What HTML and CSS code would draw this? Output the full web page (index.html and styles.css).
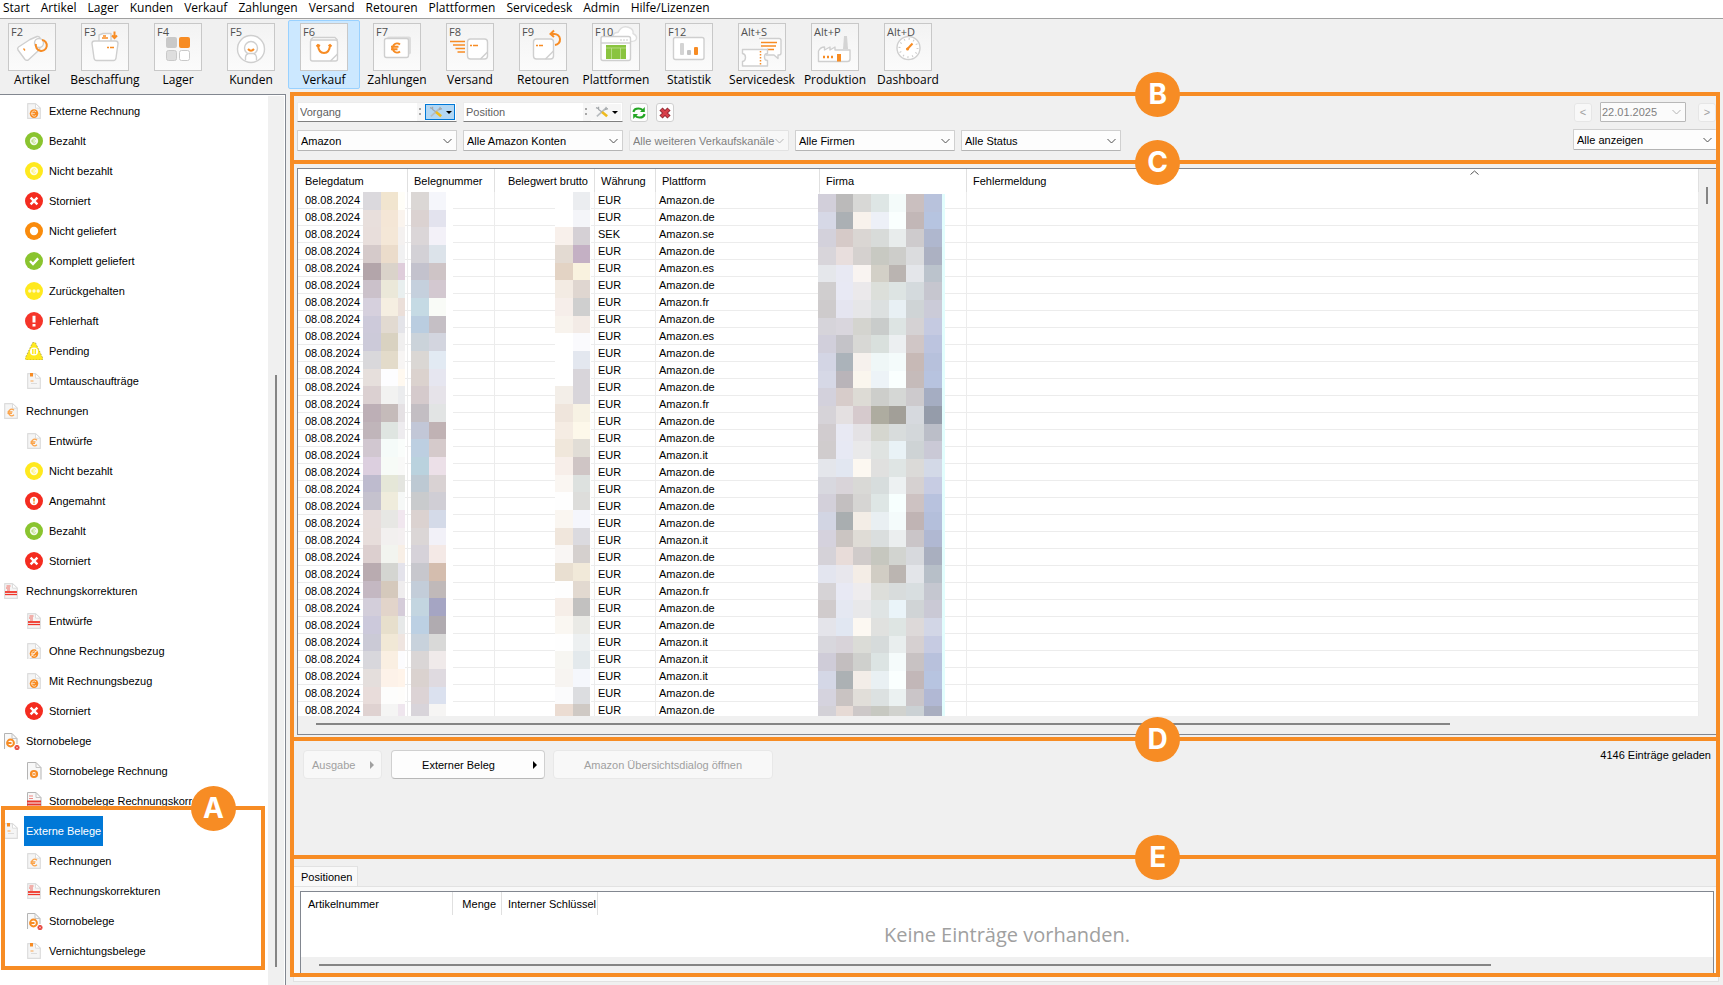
FILE: index.html
```html
<!DOCTYPE html>
<html lang="de">
<head>
<meta charset="utf-8">
<title>Verkauf – Externe Belege</title>
<link rel="stylesheet" href="styles.css">
</head>
<body>
<svg class="sprite" aria-hidden="true">
  <symbol id="page" viewBox="0 0 18 18"><path d="M2.7 1.6h7.8l4.8 4.6v10.2H2.7z" fill="#f5f5f5" stroke="#dcdcdc" stroke-width="1.2" stroke-linejoin="round"/><path d="M10.5 1.6v4.6h4.8z" fill="#fff" stroke="#dcdcdc"/></symbol>
  <symbol id="doc-euro" viewBox="0 0 18 18"><use href="#page"/><path d="M12 8.2a3.200 3.200 0 1 0 0 4.600M5.500 9.800h5M5.500 11.400h4.500" fill="none" stroke="#fba44b" stroke-width="1.200"/></symbol>
  <symbol id="doc-coin" viewBox="0 0 18 18"><use href="#page"/><circle cx="9" cy="11.6" r="4.3" fill="#f78c24"/><path d="M11 9.7a2.6 2.6 0 1 0 0 3.8M6.2 11.6h3.6" fill="none" stroke="#fbd9b4"/></symbol>
  <symbol id="doc-coin-off" viewBox="0 0 18 18"><use href="#doc-coin"/><path d="M3.5 17 14 6.5" stroke="#fff" stroke-width="1"/></symbol>
  <symbol id="doc-red" viewBox="0 0 18 18"><use href="#page"/><path d="M4.500 4h4M4 6h4M5 8h3" stroke="#ee6a60"/><path d="M3 10h12" stroke="#f03529" stroke-width="1.800"/><path d="M3 12.500h12" stroke="#f03529" stroke-width="1.300"/></symbol>
  <symbol id="doc-note" viewBox="0 0 18 18"><use href="#page"/><path d="M6.500 1v3.500" stroke="#f78c24" stroke-width="3"/><path d="M5.500 9h3" stroke="#fba44b"/><path d="M6 11.500h6" stroke="#dcdcdc"/></symbol>
  <symbol id="doc-storno" viewBox="0 0 18 18"><path d="M2.500 17V1.500H10l5 5V12" fill="#f8f8f8" stroke="#b4b4b4"/><path d="M10 1.500v5h5" fill="none" stroke="#c4c4c4"/><circle cx="8.500" cy="11" r="3.400" fill="#fff" stroke="#f78c24" stroke-width="2"/><path d="M5 11h4.500" stroke="#f78c24" stroke-width="2"/><circle cx="15" cy="15.500" r="2.500" fill="#e63a30"/><path d="m14 14.500 2 2m0-2-2 2" stroke="#fff" stroke-width=".7"/></symbol>
  <symbol id="doc-storno-plain" viewBox="0 0 18 18"><path d="M2.500 17.500V.5H11l5 5v12" fill="#f8f8f8" stroke="#b4b4b4"/><path d="M11 .5v5h5" fill="none" stroke="#c4c4c4"/><circle cx="9" cy="12" r="3" fill="#fff" stroke="#f78c24" stroke-width="2.200"/><path d="M7.500 12h3" stroke="#f78c24" stroke-width="1.500"/></symbol>
  <symbol id="doc-red-plain" viewBox="0 0 18 18"><path d="M2.500 17.500V.5H11l5 5v12" fill="#f8f8f8" stroke="#b4b4b4"/><path d="M11 .5v5h5" fill="none" stroke="#c4c4c4"/><path d="M4 4h4M4 6.500h4" stroke="#ee8a84"/><path d="M2 9.500h14M2 12.500h14" stroke="#e8382d" stroke-width="2"/></symbol>
  <symbol id="ring-green" viewBox="0 0 18 18"><circle cx="9" cy="9" r="9" fill="#8ac42f"/><circle cx="9" cy="9" r="4.200" fill="#f4faea"/><path d="M10.800 7.400a2.200 2.200 0 1 0 0 3.200M6.300 9h3.500" fill="none" stroke="#b5da7c" stroke-width=".9"/></symbol>
  <symbol id="ring-yellow" viewBox="0 0 18 18"><circle cx="9" cy="9" r="9" fill="#ffe91e"/><circle cx="9" cy="9" r="4.200" fill="#fffde6"/><path d="M10.800 7.400a2.200 2.200 0 1 0 0 3.200M6.300 9h3.500" fill="none" stroke="#fdf06c" stroke-width=".9"/></symbol>
  <symbol id="ring-red" viewBox="0 0 18 18"><circle cx="9" cy="9" r="9" fill="#f42c20"/><circle cx="9" cy="9" r="4.200" fill="#fff"/><path d="M9 6.200v3.300M9 10.500v1.300" stroke="#f78c24" stroke-width="1.600"/></symbol>
  <symbol id="ring-orange" viewBox="0 0 18 18"><circle cx="9" cy="9" r="9" fill="#f98b0c"/><circle cx="9" cy="9" r="4.200" fill="#fff"/></symbol>
  <symbol id="cross" viewBox="0 0 18 18"><circle cx="9" cy="9" r="9" fill="#f42c20"/><path d="m5.600 5.600 6.800 6.800m0-6.800-6.800 6.800" stroke="#fff" stroke-width="2.400"/></symbol>
  <symbol id="check" viewBox="0 0 18 18"><circle cx="9" cy="9" r="9" fill="#8ac42f"/><path d="m5 9 3 3 5.200-5.600" fill="none" stroke="#fff" stroke-width="2.300"/></symbol>
  <symbol id="dots" viewBox="0 0 18 18"><circle cx="9" cy="9" r="9" fill="#ffe91e"/><circle cx="4.800" cy="9" r="1.700" fill="#fffbd0"/><circle cx="9" cy="9" r="1.700" fill="#fffbd0"/><circle cx="13.200" cy="9" r="1.700" fill="#fffbd0"/></symbol>
  <symbol id="alert" viewBox="0 0 18 18"><circle cx="9" cy="9" r="9" fill="#f5352a"/><path d="M9 3.800v6.700M9 12v2.500" stroke="#fff" stroke-width="3"/></symbol>
  <symbol id="pause" viewBox="0 0 18 18"><path d="M7.500.8q1.500-1 3 0L18 16.500l-1 1.500H1l-1-1.500z" fill="#ffe91e" stroke="#8f8a4a" stroke-width=".7" stroke-dasharray="1.500 1.500"/><circle cx="9" cy="9.500" r="4" fill="#fff"/><path d="M7.800 7v5M10.300 7v5" stroke="#ffe91e" stroke-width="1.500"/></symbol>
  <symbol id="tools" viewBox="0 0 16 14"><path d="M2 12 12 3" stroke="#b9bdc0" stroke-width="2"/><path d="m1 2 3 1M4 1v3l4 3M13 1l-1 3 3-1" fill="none" stroke="#a4a8ab" stroke-width="1.500"/><path d="m8 7 6 5" stroke="#eeba1d" stroke-width="3"/></symbol>
</svg>

<nav class="menubar" aria-label="Hauptmenü">
  <button>Start</button><button>Artikel</button><button>Lager</button><button>Kunden</button><button>Verkauf</button><button>Zahlungen</button><button>Versand</button><button>Retouren</button><button>Plattformen</button><button>Servicedesk</button><button>Admin</button><button>Hilfe/Lizenzen</button>
</nav>

<div class="toolbar" role="toolbar" aria-label="Module">
  <button class="module"><span class="tile"><kbd>F2</kbd><svg viewBox="0 0 48 48"><path d="M22 16.500 10.500 24q-1.500 1.200-.5 3l7 9.500q1.500 1.500 3.500.3L30 28q2-1.500 2-4l.5-7.500q-.5-3.500-3.500-3z" class="g"/><circle cx="31" cy="20" r="4.500" class="g"/><path d="M28 21a5.500 5.500 0 1 0 6-4" class="o"/><path d="m15.500 25.500 1.500 2" class="o thin"/></svg></span>Artikel</button>
  <button class="module"><span class="tile"><kbd>F3</kbd><svg viewBox="0 0 48 48"><path d="M18 18v-6l4-1.500h8V18" class="g"/><path d="M21 15h6M22 13h3" class="o thin"/><path d="M11 20.500q0-2.500 2.500-2.500h21q2.500 0 2.500 2.500L35 35q-.3 2.500-2.500 2.500h-17q-2.200 0-2.500-2.500z" class="g"/><path d="M26 24.500h2m1 0h4" class="o thin"/><path d="M33.500 8.500v6m-2.500-2 2.500 2.500 2.500-2.500" class="o"/></svg></span>Beschaffung</button>
  <button class="module"><span class="tile"><kbd>F4</kbd><svg viewBox="0 0 48 48"><rect x="12" y="14" width="11" height="11" rx="2" fill="#c9c9c9"/><rect x="25" y="14" width="11" height="11" rx="2" fill="#f78c24"/><rect x="12.500" y="27.500" width="10" height="10" rx="2" fill="#dedede" stroke="#c9c9c9"/><rect x="25.500" y="27.500" width="10" height="10" rx="2" fill="#fff" stroke="#c9c9c9"/></svg></span>Lager</button>
  <button class="module"><span class="tile"><kbd>F5</kbd><svg viewBox="0 0 48 48"><circle cx="24" cy="26" r="13.500" class="g"/><circle cx="24" cy="25" r="6.500" class="g"/><path d="M18.500 37.500V34q.5-3 3-3.500h5q2.500.5 3 3.500v3.500" class="g"/><path d="M21 26q3 3.500 6 0" class="o"/></svg></span>Kunden</button>
  <button class="module current"><span class="tile"><kbd>F6</kbd><svg viewBox="0 0 48 48"><path d="m10.500 17 2.500-2.500h22l2.500 2.500" class="g" /><rect x="10.500" y="17" width="27" height="21" rx="2" class="g"/><path d="m37.500 31-7 7" class="g"/><path d="M18 22q.5 8 6 8t6-8m-13.500 1.500L18 22l2 1m8.500 0 1.500-1 1.500 1.500" class="o"/></svg></span>Verkauf</button>
  <button class="module"><span class="tile"><kbd>F7</kbd><svg viewBox="0 0 48 48"><rect x="14" y="13.500" width="24" height="18" rx="2" fill="#ddd"/><rect x="11.500" y="15.500" width="24" height="19" rx="2" class="g"/><path d="M27 21.500a4.500 4.500 0 1 0 0 7M18 23.800h7.500M18 26.300h6.500" class="o"/></svg></span>Zahlungen</button>
  <button class="module"><span class="tile"><kbd>F8</kbd><svg viewBox="0 0 48 48"><path d="M4 18.500h15M7 22h12M9.500 25.500H19M11.500 29H19" class="o thin"/><rect x="21.500" y="16" width="20" height="20" rx="3" class="g"/><path d="m41.500 29-7 7" class="g"/><path d="M24 22.500h2m1 0h5" class="o thin"/></svg></span>Versand</button>
  <button class="module"><span class="tile"><kbd>F9</kbd><svg viewBox="0 0 48 48"><rect x="14.500" y="16" width="20" height="20" rx="3" class="g"/><path d="m34.500 28-8 8" class="g"/><path d="M17 22.500h2m1 0h4" class="o thin"/><path d="M32 11h3a5.500 5.500 0 0 1 1 11M35 7.500 31.500 11l3.500 3" class="o"/></svg></span>Retouren</button>
  <button class="module"><span class="tile"><kbd>F10</kbd><svg viewBox="0 0 48 48"><path d="M21 13q1-4 5-3.500 4-8 11-5 5 2 4 6 4 2 3.500 5-.5 3-5.500 3" class="g pale"/><rect x="9" y="13.500" width="29.500" height="24" rx="2" class="g"/><path d="M9 20h29.500" class="g"/><path d="M28 17h2m1 0h2m1 0h2" stroke="#ccc"/><path d="M14 22h20v14H14z" fill="#8ac43f"/><path d="M14 25h20M19.500 25v11M28.500 25v11" stroke="#c2e294" stroke-width=".8"/></svg></span>Plattformen</button>
  <button class="module"><span class="tile"><kbd>F12</kbd><svg viewBox="0 0 48 48"><rect x="8.500" y="14.500" width="30.500" height="22" rx="2" class="g"/><rect x="15" y="20" width="4" height="12" rx="1" fill="#d4d4d4"/><rect x="22" y="27" width="4" height="5" rx="1" fill="#c4c4c4"/><rect x="29" y="24" width="4" height="8" rx="1" fill="#f78c24"/></svg></span>Statistik</button>
  <button class="module"><span class="tile"><kbd>Alt+S</kbd><svg viewBox="0 0 48 48"><path d="M21 15.500h20q2 0 2 2V30q0 2-2 2h-1v3.500L36 32h-8" class="g"/><path d="M23 19.500h16M23 23h15M29 26.500h7" class="o thin"/><path d="M4.500 26.500h25v4q-3 0-3 3.500t3 3.500V43h-25v-4.500q3-.5 3-4t-3-4z" class="g"/><path d="M22.500 28v14" stroke="#f78c24" stroke-width="1.500" stroke-dasharray="1.500 1.500"/></svg></span>Servicedesk</button>
  <button class="module"><span class="tile"><kbd>Alt+P</kbd><svg viewBox="0 0 48 48"><path d="m32 26 1-13h3l1 13z" fill="#d4d4d4"/><path d="M7.500 38.500V28q2-4 6-4v3l5.500-3v3l5-3v3h15v9q0 2.500-2.500 2.500z" class="g"/><path d="M12 34h2m2 0h2m2 0h2" stroke="#f78c24" stroke-width="2.500"/><path d="M26 31h4v7.500h-4z" fill="#f78c24"/></svg></span>Produktion</button>
  <button class="module"><span class="tile"><kbd>Alt+D</kbd><svg viewBox="0 0 48 48"><circle cx="24.500" cy="25" r="11.500" class="g"/><circle cx="24.500" cy="25" r="9" fill="none" stroke="#ccc" stroke-width="2" stroke-dasharray="1 3.700"/><path d="m23 26.500 5.500-6" class="o"/><circle cx="23.500" cy="26" r="1.500" fill="#f78c24"/></svg></span>Dashboard</button>
</div>

<div class="workspace">
  <aside class="sidebar">
    <div class="tree">
      <ul>
        <li class="sub"><svg><use href="#doc-coin"/></svg><span>Externe Rechnung</span></li>
        <li class="sub"><svg><use href="#ring-green"/></svg><span>Bezahlt</span></li>
        <li class="sub"><svg><use href="#ring-yellow"/></svg><span>Nicht bezahlt</span></li>
        <li class="sub"><svg><use href="#cross"/></svg><span>Storniert</span></li>
        <li class="sub"><svg><use href="#ring-orange"/></svg><span>Nicht geliefert</span></li>
        <li class="sub"><svg><use href="#check"/></svg><span>Komplett geliefert</span></li>
        <li class="sub"><svg><use href="#dots"/></svg><span>Zurückgehalten</span></li>
        <li class="sub"><svg><use href="#alert"/></svg><span>Fehlerhaft</span></li>
        <li class="sub"><svg><use href="#pause"/></svg><span>Pending</span></li>
        <li class="sub"><svg><use href="#doc-note"/></svg><span>Umtauschaufträge</span></li>
        <li><svg><use href="#doc-euro"/></svg><span>Rechnungen</span></li>
        <li class="sub"><svg><use href="#doc-euro"/></svg><span>Entwürfe</span></li>
        <li class="sub"><svg><use href="#ring-yellow"/></svg><span>Nicht bezahlt</span></li>
        <li class="sub"><svg><use href="#ring-red"/></svg><span>Angemahnt</span></li>
        <li class="sub"><svg><use href="#ring-green"/></svg><span>Bezahlt</span></li>
        <li class="sub"><svg><use href="#cross"/></svg><span>Storniert</span></li>
        <li><svg><use href="#doc-red"/></svg><span>Rechnungskorrekturen</span></li>
        <li class="sub"><svg><use href="#doc-red"/></svg><span>Entwürfe</span></li>
        <li class="sub"><svg><use href="#doc-coin-off"/></svg><span>Ohne Rechnungsbezug</span></li>
        <li class="sub"><svg><use href="#doc-coin"/></svg><span>Mit Rechnungsbezug</span></li>
        <li class="sub"><svg><use href="#cross"/></svg><span>Storniert</span></li>
        <li><svg><use href="#doc-storno"/></svg><span>Stornobelege</span></li>
        <li class="sub"><svg><use href="#doc-storno-plain"/></svg><span>Stornobelege Rechnung</span></li>
        <li class="sub"><svg><use href="#doc-red-plain"/></svg><span>Stornobelege Rechnungskorrekturen</span></li>
      </ul>
      <div class="marked">
        <ul>
          <li class="selected"><svg><use href="#doc-note"/></svg><span>Externe Belege</span></li>
          <li class="sub"><svg><use href="#doc-euro"/></svg><span>Rechnungen</span></li>
          <li class="sub"><svg><use href="#doc-red"/></svg><span>Rechnungskorrekturen</span></li>
          <li class="sub"><svg><use href="#doc-storno"/></svg><span>Stornobelege</span></li>
          <li class="sub"><svg><use href="#doc-note"/></svg><span>Vernichtungsbelege</span></li>
        </ul>
        <div class="outline"><b class="badge">A</b></div>
      </div>
    </div>
    <div class="vscroll"><i></i></div>
  </aside>

  <main class="main">
    <div class="frame">
      <section class="filters">
        <b class="badge">B</b>
        <div class="filter-left">
          <div class="line">
            <div class="search"><input type="text" placeholder="Vorgang" aria-label="Vorgang"><span class="grip"></span><button class="opt active" aria-label="Suchoptionen Vorgang"><svg><use href="#tools"/></svg><i></i></button></div>
            <div class="search"><input type="text" placeholder="Position" aria-label="Position"><span class="grip"></span><button class="opt" aria-label="Suchoptionen Position"><svg><use href="#tools"/></svg><i></i></button></div>
            <div class="actions">
              <button class="mini" aria-label="Aktualisieren"><svg viewBox="0 0 14 14"><path d="M1.500 6Q2 2.500 6.500 2.500q2.500 0 4 1.500M12.500 8Q12 11.500 7.500 11.500q-2.500 0-4-1.500" fill="none" stroke="#22a522" stroke-width="2.200"/><path d="M12.800 1v5H8zM1.200 13V8H6z" fill="#22a522"/></svg></button>
              <button class="mini" aria-label="Filter zurücksetzen"><svg viewBox="0 0 14 14"><path d="m3 3 8 8m0-8-8 8" stroke="#8d2730" stroke-width="4.500"/><path d="m3.500 3.500 7 7m0-7-7 7" stroke="#d8404a" stroke-width="2.500"/></svg></button>
            </div>
          </div>
          <div class="line">
            <select aria-label="Plattform"><option>Amazon</option></select>
            <select aria-label="Konto"><option>Alle Amazon Konten</option></select>
            <select aria-label="Verkaufskanal" disabled><option>Alle weiteren Verkaufskanäle</option></select>
            <select aria-label="Firma"><option>Alle Firmen</option></select>
            <select aria-label="Status"><option>Alle Status</option></select>
          </div>
        </div>
        <div class="filter-right">
          <div class="line dates">
            <button class="mini" disabled aria-label="Vorheriger Tag">&lt;</button>
            <input class="date" type="text" value="22.01.2025" aria-label="Datum" disabled>
            <button class="mini" disabled aria-label="Nächster Tag">&gt;</button>
          </div>
          <select class="range" aria-label="Zeitraum"><option>Alle anzeigen</option></select>
        </div>
      </section>

      <section class="list">
        <b class="badge">C</b>
        <div class="grid">
          <div class="view">
            <table>
              <colgroup><col class="c-date"><col class="c-no"><col class="c-val"><col class="c-cur"><col class="c-plat"><col class="c-firm"><col></colgroup>
              <thead><tr><th>Belegdatum</th><th>Belegnummer</th><th class="num">Belegwert brutto</th><th>Währung</th><th>Plattform</th><th>Firma</th><th class="last">Fehlermeldung<svg class="sort" viewBox="0 0 9 5"><path d="m.5 4.500 4-3.500 4 3.500" fill="none" stroke="#555"/></svg></th></tr></thead>
              <tbody id="rows"></tbody>
            </table>
            <div id="redactions" aria-hidden="true"></div>
          </div>
          <div class="vscroll"><i></i></div>
          <div class="hscroll"><i></i></div>
        </div>
      </section>

      <section class="commands">
        <b class="badge">D</b>
        <button class="cmd output" disabled>Ausgabe<i></i></button>
        <button class="cmd external"><span>Externer Beleg</span><i></i></button>
        <button class="cmd overview" disabled>Amazon Übersichtsdialog öffnen</button>
        <span class="count">4146 Einträge geladen</span>
      </section>

      <section class="details">
        <b class="badge">E</b>
        <div class="tabs" role="tablist"><button role="tab" aria-selected="true">Positionen</button></div>
        <div class="pane">
          <div class="positions">
            <table>
              <colgroup><col class="p-no"><col class="p-qty"><col class="p-key"></colgroup>
              <thead><tr><th>Artikelnummer</th><th class="num">Menge</th><th>Interner Schlüssel</th></tr></thead>
            </table>
            <p class="empty">Keine Einträge vorhanden.</p>
            <div class="hscroll"><i></i></div>
          </div>
        </div>
      </section>
    </div>
    <div class="pane-end"></div>
  </main>
</div>
<script src="app.js"></script>
</body>
</html>
```

FILE: styles.css
```css
* { box-sizing: border-box; }

:root {
  --orange: #f78c24;
  --face: #f0f0f0;
  --edge: #828790;
  --ui: "Open Sans", "Noto Sans", sans-serif;
  --list: "Liberation Sans", Arial, sans-serif;
}

body {
  margin: 0;
  height: 100vh;
  display: flex;
  flex-direction: column;
  overflow: hidden;
  background: var(--face);
  color: #000;
  font: 11px/16px var(--list);
}

button, input, select { font: inherit; color: inherit; margin: 0; }
button { padding: 0; border: 0; background: none; }
ul { list-style: none; margin: 0; padding: 0; }
.sprite { position: absolute; width: 0; height: 0; }

/* Menu and module bar */
.menubar {
  display: flex;
  flex: none;
  gap: 11px;
  height: 19px;
  padding: 0 3px 2px;
  background: #fff;
  border-bottom: 1px solid #a0a0a0;
  font: 12px/16px var(--ui);
}
.toolbar {
  display: flex;
  flex: none;
  gap: 1px;
  height: 73px;
  margin-left: -4px;
  padding-top: 1px;
}
.module {
  display: flex;
  flex-direction: column;
  align-items: center;
  width: 72px;
  height: 69px;
  padding-top: 2px;
  border: 1px solid transparent;
  border-radius: 2px;
  font: 12px/17px var(--ui);
}
.module.current { background: #cce8ff; border-color: #99d1ff; }
.tile {
  position: relative;
  width: 48px;
  height: 48px;
  border: 1px solid #c8c8c8;
  background: linear-gradient(#f3f3f3, #fbfbfb);
}
.tile svg { display: block; width: 48px; height: 48px; margin: -1px; }
.tile kbd {
  position: absolute;
  left: 2px;
  top: 0;
  color: #505050;
  font: 11px/16px var(--ui);
}
.g { fill: #fff; stroke: #cfcfcf; stroke-width: 1.4; stroke-linejoin: round; }
.pale { stroke: #dedede; }
.o { fill: none; stroke: #f78c24; stroke-width: 2; }
.thin { stroke-width: 1.3; }

/* Layout */
.workspace { display: flex; flex: 1; min-height: 0; }
.sidebar {
  display: flex;
  flex: none;
  width: 286px;
  margin-top: 2px;
  padding: 1px 1px 0 0;
  border-top: 1px solid var(--edge);
  border-right: 1px solid var(--edge);
  background: #fff;
}
.tree { flex: 1; min-width: 0; }
.tree li {
  display: flex;
  align-items: center;
  gap: 4px;
  height: 30px;
  padding-left: 2px;
  white-space: nowrap;
}
.tree li.sub { padding-left: 25px; }
.tree svg { flex: none; width: 18px; height: 18px; }
.tree span { padding: 0 2px; line-height: 30px; }
.tree .selected span { background: #0078d7; color: #fff; }
.marked { position: relative; }
.outline {
  position: absolute;
  inset: -10px 3px -4px 1px;
  border: 4px solid var(--orange);
}
.badge {
  position: absolute;
  z-index: 2;
  top: -24px;
  left: calc(60% - 12px);
  width: 45px;
  height: 45px;
  border-radius: 50%;
  background: var(--orange);
  color: #fff;
  font: 700 28px/45px Inter, sans-serif;
  text-align: center;
}
.outline .badge { left: auto; right: 25px; }

.vscroll { flex: none; width: 16px; background: var(--face); }
.vscroll i { display: block; width: 2px; margin-left: 7px; background: #858585; }
.sidebar .vscroll { display: flex; align-items: flex-end; padding-bottom: 18px; }
.sidebar .vscroll i { height: 68%; }
.hscroll { flex: none; height: 16px; padding-top: 7px; background: var(--face); }
.hscroll i { display: block; height: 2px; background: #858585; }

.main {
  display: flex;
  flex: 1;
  flex-direction: column;
  min-width: 0;
  padding: 0 3px 0 4px;
}
.frame {
  display: flex;
  flex: 1;
  flex-direction: column;
  min-height: 0;
  border: 4px solid var(--orange);
}
.frame > section { position: relative; }
.frame > section + section { border-top: 4px solid var(--orange); }

/* Filters */
.filters {
  display: flex;
  justify-content: space-between;
  padding: 6px 0 9px 3px;
}
.line { display: flex; gap: 6px; }
.filter-left { display: flex; flex-direction: column; gap: 8px; }
.search {
  display: flex;
  align-items: center;
  width: 160px;
  height: 20px;
  background: #fff;
  border: 1px solid #ececec;
  border-bottom-color: #808080;
}
.search input {
  flex: 1;
  min-width: 0;
  height: 17px;
  padding: 0 2px;
  border: 0;
  background: none;
  outline: 0;
}
.search input::placeholder { color: #606060; opacity: 1; }
.grip {
  width: 8px;
  height: 18px;
  background:
    linear-gradient(#a8a8a8, #a8a8a8) 2px 5px / 2px 2px no-repeat,
    linear-gradient(#a8a8a8, #a8a8a8) 2px 10px / 2px 2px no-repeat,
    #f6f6f6;
}
.opt {
  display: flex;
  align-items: center;
  justify-content: center;
  gap: 2px;
  width: 30px;
  height: 16px;
  margin-right: 1px;
  border: 1px solid #f6f6f6;
  background: #f6f6f6;
}
.opt.active { background: #b3d7f3; border-color: #0078d7; }
.opt svg { width: 16px; height: 12px; }
.opt i { border: 3px solid transparent; border-top-color: #000; border-bottom: 0; }
.actions { display: flex; gap: 8px; padding: 1px 0 0 1px; }
.mini {
  display: flex;
  align-items: center;
  justify-content: center;
  width: 18px;
  height: 19px;
  border: 1px solid #d0d0d0;
  border-radius: 3px;
  background: #fdfdfd;
}
.mini svg { width: 14px; height: 14px; }
.mini:disabled { color: #a0a0a0; background: #f8f8f8; border-color: #e6e6e6; }

select, .date {
  appearance: none;
  width: 160px;
  height: 21px;
  padding: 0 12px 0 3px;
  border: 1px solid #d0d0d0;
  border-bottom-color: #b4b4b4;
  border-radius: 1px;
  background: #fdfdfd url("data:image/svg+xml,%3Csvg xmlns='http://www.w3.org/2000/svg' width='9' height='6'%3E%3Cpath d='m.5 1 4 4 4-4' fill='none' stroke='%23505050'/%3E%3C/svg%3E") no-repeat right 4px center;
  opacity: 1;
}
select:disabled, .date:disabled {
  color: #808080;
  border-color: #e2e2e2;
  background-color: #f7f7f7;
  background-image: url("data:image/svg+xml,%3Csvg xmlns='http://www.w3.org/2000/svg' width='9' height='6'%3E%3Cpath d='m.5 1 4 4 4-4' fill='none' stroke='%23b4b4b4'/%3E%3C/svg%3E");
}
.filter-right { display: flex; flex-direction: column; align-items: flex-end; gap: 7px; }
.dates { align-items: center; gap: 8px; }
.dates .mini:last-child { margin-left: 4px; }
.date:disabled { width: 86px; height: 20px; padding-left: 1px; border-color: #b8b8b8; background-color: #fbfbfb; }
.range { width: 143px; border-right: 0; }

/* Document list */
.list {
  display: flex;
  flex: 1;
  min-height: 0;
  padding: 4px 0 2px 3px;
}
.grid {
  display: grid;
  flex: 1;
  grid-template: minmax(0, 1fr) auto / minmax(0, 1fr) auto;
  min-width: 0;
  border: 1px solid var(--edge);
  border-right: 0;
  background: #fff;
}
.view { position: relative; overflow: hidden; }
.grid .hscroll { grid-column: 1 / -1; height: 18px; }
.grid .hscroll i { width: 80%; margin-left: 18px; }
.grid .vscroll { width: 17px; padding-top: 18px; }
.grid .vscroll i { height: 17px; }

table { border-spacing: 0; table-layout: fixed; width: 100%; }
th, td {
  padding: 0 3px;
  text-align: left;
  font-weight: 400;
  white-space: nowrap;
  border-right: 1px solid #ececec;
}
th { height: 23px; padding: 0 6px; border-right-color: #e0e0e0; }
td { height: 17px; line-height: 16px; border-bottom: 1px solid #ececec; }
td:first-child, th:first-child { padding-left: 7px; }
.num { text-align: right; }
.last { position: relative; }
.sort { position: absolute; top: 1px; right: 219px; width: 9px; height: 5px; }
.c-date { width: 110px; }
.c-no { width: 87px; }
.c-val { width: 100px; }
.c-cur { width: 61px; }
.c-plat { width: 164px; }
.c-firm { width: 147px; }
.mosaic { position: absolute; top: 23px; height: 530px; background: #fff; }
.m-date { left: 65px; width: 42px; }
.m-no { left: 113px; width: 42px; }
.m-val { left: 257px; width: 36px; }
.m-firm { left: 520px; top: 25px; width: 127px; }

/* Commands */
.commands {
  display: flex;
  align-items: flex-start;
  min-height: 118px;
  padding: 9px 5px 0 9px;
}
.cmd {
  display: flex;
  align-items: center;
  justify-content: center;
  height: 29px;
  border: 1px solid #d0d0d0;
  border-bottom-color: #b8b8b8;
  border-radius: 4px;
  background: #fdfdfd;
}
.cmd:disabled { color: #a0a0a0; background: #f8f8f8; border-color: #e8e8e8; }
.cmd i { border: 4px solid transparent; border-left-color: currentColor; border-right: 0; }
.output { justify-content: space-between; width: 79px; padding: 0 7px 0 8px; }
.external { width: 154px; margin: 0 8px 0 9px; padding-right: 7px; }
.external span { flex: 1; padding-right: 8px; }
.overview { width: 220px; }
.count { margin-left: auto; line-height: 10px; }

/* Positions */
.details { display: flex; flex-direction: column; height: 118px; padding-top: 7px; }
.tabs { display: flex; border-bottom: 1px solid #e2e2e2; }
.tabs button {
  height: 20px;
  padding: 0 5px 0 7px;
  border: 1px solid #e2e2e2;
  border-width: 1px 1px 0 0;
  background: #f9f9f9;
}
.pane { display: flex; flex: 1; padding: 4px 2px 0 6px; background: #f9f9f9; }
.positions {
  display: flex;
  flex: 1;
  flex-direction: column;
  border: 1px solid var(--edge);
  border-bottom: 0;
  background: #fff;
}
.positions table { width: 297px; }
.positions th { padding-right: 5px; }
.positions th:last-child { padding-right: 0; }
.p-no { width: 152px; }
.p-qty { width: 49px; }
.p-key { width: 96px; }
.empty {
  flex: 1;
  margin: 0;
  color: #a0a0a0;
  font: 20px/40px var(--ui);
  text-align: center;
}
.positions .hscroll i { width: 83%; margin-left: 18px; }
.pane-end {
  flex: none;
  height: 5px;
  margin: 0 1px 3px 3px;
  background: #f9f9f9;
  border: 1px solid #e2e2e2;
  border-top: 0;
}
```

FILE: app.js
```js
const platforms = "de de se de es de fr de es de de de fr de de it de de de de it de de fr de de it it it de de".split(" ");

document.getElementById("rows").innerHTML = platforms.map((tld, i) =>
  `<tr><td>08.08.2024</td><td></td><td></td><td>${i === 2 ? "SEK" : "EUR"}</td><td>Amazon.${tld}</td><td></td><td></td></tr>`
).join("");

// Pixelated covers for private columns: one line per block row, one colour per block.
const covers = [
  { name: "m-date", width: 42, steps: [0, 18, 35, 42], rows: `
dbd9dd f1e5cf fffef8|e8dfdc f4e6d6 faf4ee|e8dedb f4e7d7 f4f1f0|d5caca ebdccb f1f1f2|b3a5aa dad3ca dfcddb
cbc1ca ebe8d9 e9efef|d6d0dd f5eee1 ebdfd9|cdcada e2dad1 e4e4e9|cccad9 d9d2c1 f0efef|d9d8db e3dbca f7f5f4
e6dfdc fdfdff fff9f0|dbd0d1 f2f2f1 ebecee|bdafb6 c5bbba e5e1e4|c0b5ba dfe5e1 eeecef|d1c7d0 f5fbf9 fafdfb
dccfdf f7fbf7 f9f9f8|bebbce e5e7d8 e4e5e0|c5c2ce efecdc f6f8f7|e7dddc e7e7e4 f1e7ef|e7dddb f2f0ef f4f0f1
dccfcf f2f4ef f8efe6|b9abb0 d4d5d1 e4e3eb|c4b8c2 d5c9bc efedee|d3ceda e2d4ca d5ccd9|ccc9db e7dfcc e7e9e9
cbcad6 f1e8d6 efe5e0|d8d7dc faefe2 fcfcfe|e4dedc fdf2e9 fff4ea|e8dcda fdfdfc fefdfb|dfd2d1 f5f5f4 efe6ee` },
  { name: "m-no", width: 42, steps: [0, 18, 35], rows: `
dbd7d5 f5f6fb|dbd2d1 e3e3ee|dbd6d8 f3f1f8|d3d1d6 dce3ea|c3c2cd cec4c6|c5d0dd d3c8d0|c5dae4 f9fbf7|bacde0 c5bfc5|cbd3da d3d5df|dad7d4 e2eaf3
dbd2ce e6e6f0|d5cacc e6e3e9|c3bec3 e2e4e4|c2c7d7 c0b2b4|bdcfe1 d5cacb|bad2de ece0e8|bdc9d3 d9d2d3|c9cbcd d0ced5|dbd2d0 d4dae8|dbd6d6 f2f1f8
d6d2d9 f4e9e6|c7c7cd d4bdae|c3cdd9 c0b9b9|c3d5e0 a5a5c3|bcd0e3 b0abb0|c8d2dc d9d9d8|dad6d6 f0eaea|dad2cf dfdae0|dcd3d5 dbe1ef|d8d4da f6f5f4` },
  { name: "m-val", width: 36, steps: [0, 18, 35], rows: `
ffffff ebedf0|ffffff f4f5f9|f8f0eb d5d0d5|e3dad2 c4b0c4|e3d3c4 f9f2df|f3ebe3 dfd6d0|f6eeea cfcfcf|f8f3ed f3ebe6|ffffff fafafd|ffffff e3e7ef
ffffff d8d5da|f3eee8 d8d5da|efe5dc f7f2e4|f5ece3 fdf8ea|f0e7db e1ddd6|f7eee9 cfc5c5|faf6f2 dde1df|fefefe dddddb|faf6f1 f5f6fc|f0e6dc dbdadf
f9f6f4 d5d0ce|e9dfd1 f1e9d9|fefefe e2d9d0|f6eee8 c2c1c0|faf7f2 eaeae6|fefefe edf0f1|f7f6f2 e3e9ec|f7f4f1 f5f7fc|fbfbfc dcdde0|ebdcd2 cfc9c4` },
  { name: "m-firm", width: 127, steps: [0, 18, 35, 53, 71, 88, 106, 124, 127], rows: `
d2cfda bbbaba d8d8d6 dee6e5 f4fbfa cabfbf b8c2dc|d6d8e6 abb0b4 f8f2ec edf0f7 fafffe c2b7b7 b6c4e0|d3d1db d6cac8 dad6d3 d8dbd9 e8ecec cecbcd afb7ce
d8d5da e8dedd d5d1cf c8c9c2 cdcdca dbdcde acb1c2|e5e7eb e8e9f3 f9f4f1 d3d0c7 bab4b1 e4e6ea bbc3cc|d0cecf e8e9f4 ebe9eb dcdfda dde4e3 d4dadd c6c6cf
cecbcc e5e5f0 e6e6e8 dce0e0 e8f0f4 cfd4d6 cbcbd8|d6d4da d9d6dd d4d4cf c9cccb dde4e3 d5d2d4 c5cae1|d1cfdb c4c3c8 d8d8d5 d9e0dd eceff1 d0c6c6 bcc4df
d3d5e4 abb3ba f6f1ed eff7f7 f4fbfb c7b9b6 b7c1dc|d6d8e6 b9b4b9 faf6ee edf3f7 fafffe c5bbba b7c3df|d3d1dc d7ccca dddbd5 cdcecb d5d7d5 cdcacd a5adc2
d6d3d8 e4e0e1 d6cacd aeaca0 a29f98 d6d9de 959caa|d1cccf e8e9f3 e4e2e5 d5d6cf d8dcdc d3d7da bbbec8|d0cccd e7e9f4 e9e9ea dfe3e1 e9f2f6 ced3d5 cac9d6
e4e6eb e2e7f1 fcf8f1 e0e0df dfe5e4 dbdad8 d3d9e7|d8d8df d9d4d9 d9d9d6 d7dddd edf1f2 d6d1d1 c7cce3|d3d0da c3bfc0 d6d5d3 dee6e5 f7fffe cdc2c2 b8c2de
d2d5e3 a9aeb0 f3ede6 e9eff2 f4fbfb c0b4b4 b4bfdb|d5d2dd cbc5c2 dfdcd6 dadede ebeeef cac5c8 b0b8d2|d5d2d8 e8dcd9 d0cbca c6c7bf d2d4d0 d7d9dd a9afbf
e3e5ef e8e7ed f4ede6 d1cdc4 bbb5b1 e3e5e9 b7bfc8|d6d3d6 e8e9f4 eeecee dddeda d8dcdc d8dee0 c5c7d0|d0cbcc e5e8f2 e8e8ea dfe4e4 eaf4f9 d0d4d6 cac9d5
e4e4ea e1e7f2 fcf8f2 e0e1df dee5e3 ddd9d9 d2d6e6|d8d7dd d8d3d9 dbdcd7 d6dbdb e9eeee d6d0d1 c6cbe2|cfccd8 c3bebf cfd0cd dce4e3 f5fbfb c8c2c3 b8c1dc
d4d7e6 acb1b4 f3ede8 e9f0f3 fafffe c2b7b8 b7c4e0|d5d3de c9c3c2 e1ded9 dce1e1 ebf1f1 cac5c8 b1b8d4|d3d1d7 e6dad5 cdc8c8 c7c8c1 d1d2ce cbd1d4 a9aec0` }
];

document.getElementById("redactions").innerHTML = covers.map(({ name, width, steps, rows }) => {
  const blocks = rows.trim().split(/[|\n]/).map((row, y) => {
    const colours = row.split(" ");
    if (name === "m-firm") colours.push("e2fdfd");
    return colours.map((c, x) =>
      `<rect x="${steps[x]}" y="${y}" width="${steps[x + 1] ? steps[x + 1] - steps[x] : 0}" height="1" fill="#${c}"/>`
    ).join("");
  }).join("");
  return `<svg class="mosaic ${name}" viewBox="0 0 ${width} 30" preserveAspectRatio="none" shape-rendering="crispEdges">${blocks}</svg>`;
}).join("");
```
